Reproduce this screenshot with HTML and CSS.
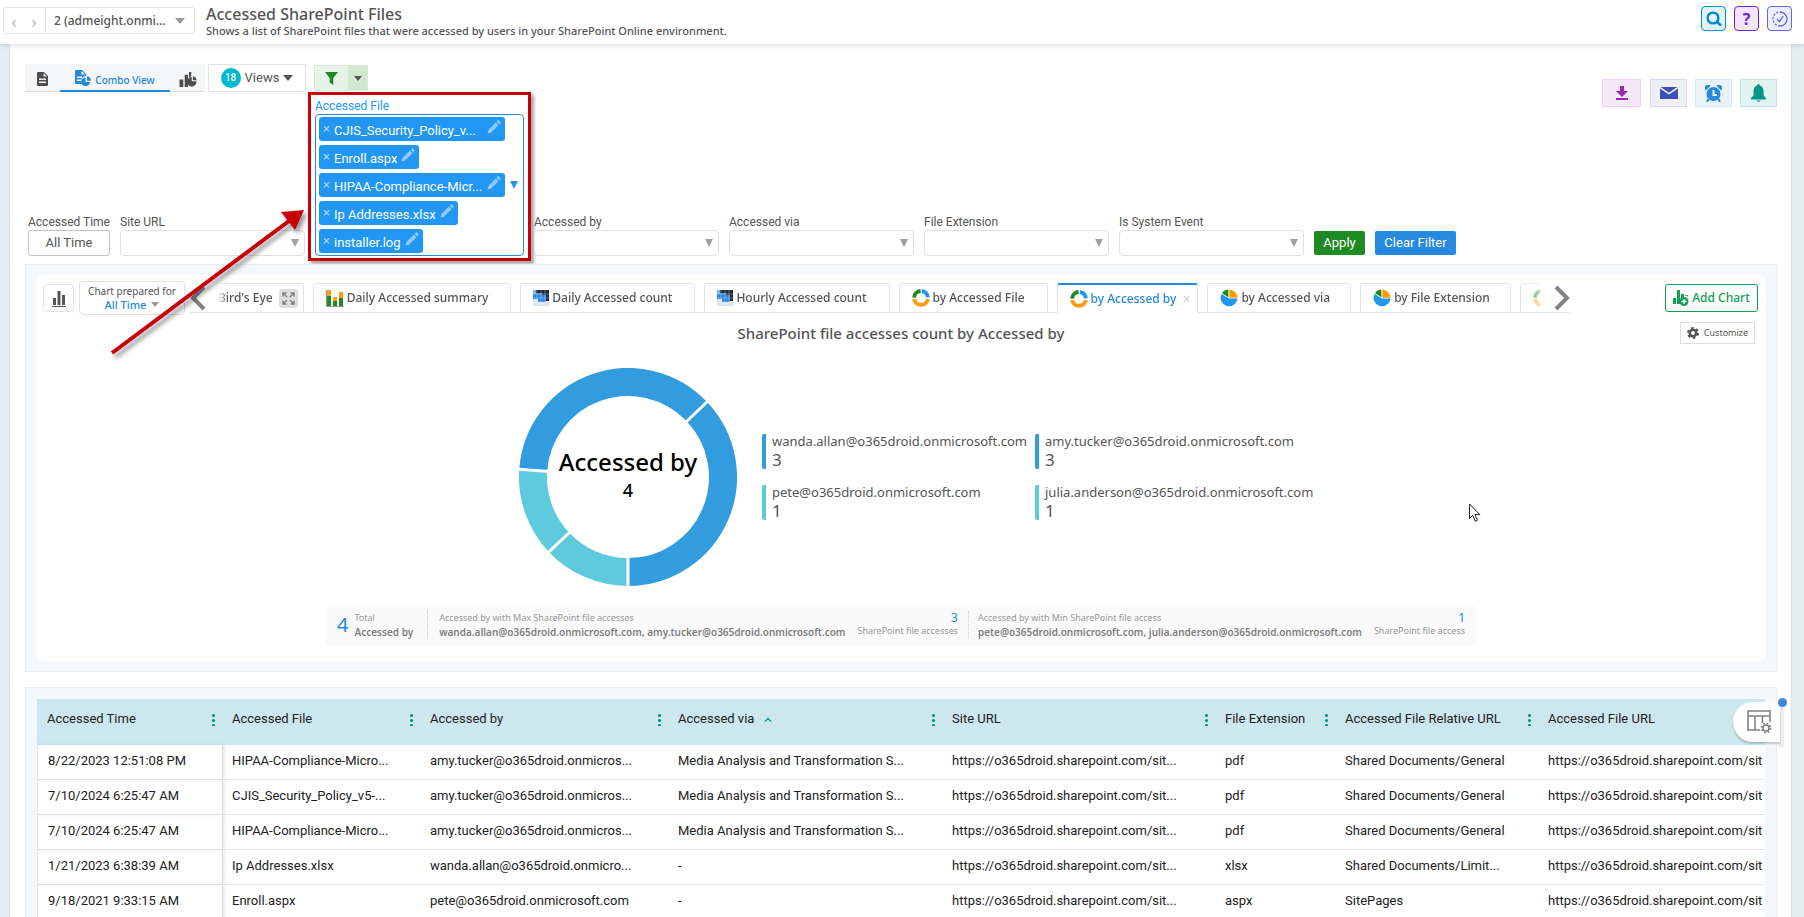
FILE: index.html
```html
<!DOCTYPE html>
<html lang="en">
<head>
<meta charset="utf-8">
<title>Accessed SharePoint Files</title>
<link rel="stylesheet" href="styles.css">
</head>
<body>
<svg class="defs" aria-hidden="true">
  <symbol id="i-donut" viewBox="0 0 18 18"><g fill="none" stroke-width="4"><path stroke="#ff9c07" d="M2.1 10a7 7 0 0 0 13.8 0"/><path stroke="#2196f3" d="M10 2.1a7 7 0 0 1 5.9 6.3"/><path stroke="#1f8a22" d="M2.1 8.6A7 7 0 0 1 8.6 2"/></g></symbol>
  <symbol id="i-pie" viewBox="0 0 18 18"><path fill="#2196f3" d="M9 9.6h8.4A8.4 8.4 0 1 1 1.6 5z"/><path fill="#ff9c07" d="M9.3 8.8V.6a8.3 8.3 0 0 1 8.2 8.2z"/><path fill="#1f8a22" d="M8.4 8.2V.6A8.4 8.4 0 0 0 2 4.2z"/></symbol>
  <symbol id="i-heat" viewBox="0 0 16 16"><path fill="#d9e6f2" d="M0 0h16v16H0z"/><path fill="#222a38" d="M3 0h13v11h-3V5H9V3H3z"/><path fill="#2f86e0" d="M0 4h3V3h6v2h4v7H5V9H0z"/><path fill="#6db5f5" d="M0 0h3v4H0z"/><path stroke="#fff" stroke-width=".3" fill="none" d="M4 0v16M8 0v16M12 0v16M0 4h16M0 8h16M0 12h16"/></symbol>
  <symbol id="i-pencil" viewBox="0 0 14 14"><path d="M.5 13.5l.9-3.6 7.4-7.4 2.7 2.7-7.4 7.4zM9.6 1.7l1-1c.5-.5 1.100-.5 1.600 0l1.100 1.100c.5.5.5 1.100 0 1.600l-1 1z"/></symbol>
  <symbol id="i-chart" viewBox="0 0 18 17"><path d="M0 9h4v8H0zM5.500 4h3.500v13H5.500zM10 1h2.500v4.500A6 6 0 0 0 10 7.500z"/><path d="M13 6.500V11h5a5 5 0 1 1-5-4.500z"/><path d="M14.200 5.500a4.500 4.500 0 0 1 3.800 4.200h-3.800z"/></symbol>
</svg>
<header class="topbar">
  <div class="switcher">
    <button class="step" aria-label="Previous">&#8249;</button>
    <button class="step" aria-label="Next">&#8250;</button>
    <button class="tenant"><span>2 (admeight.onmi...</span><i class="caret caret-grey"></i></button>
  </div>
  <div class="heading">
    <h1>Accessed SharePoint Files</h1>
    <p>Shows a list of SharePoint files that were accessed by users in your SharePoint Online environment.</p>
  </div>
  <div class="top-icons">
    <button class="sq sq-search" aria-label="Search"><svg width="16" height="16" viewBox="0 0 16 16"><g fill="none" stroke="#0288d1" stroke-width="2.400"><circle cx="7" cy="7" r="5.400"/><path d="M10.500 10.500l4.500 4"/></g></svg></button>
    <button class="sq sq-help" aria-label="Help">?</button>
    <button class="sq sq-check" aria-label="Status"><svg width="16" height="16" viewBox="0 0 16 16"><g fill="none" stroke="#6366f1" stroke-width="1.300"><path d="M8 1a7 7 0 0 1 0 14"/><path stroke-dasharray="2 1.600" d="M8 15A7 7 0 0 1 8 1"/><path d="M5 8.200l2.300 2.500 4-5.500"/></g></svg></button>
  </div>
</header>
<main class="page">
  <section class="controls">
    <div class="left">
      <div class="toolbar">
        <div class="view-tabs">
          <button class="vtab" aria-label="Report view"><svg width="11" height="14" viewBox="0 0 11 14"><path fill="#4d4d4d" fill-rule="evenodd" d="M0 1.200Q0 0 1.200 0H7l4 4v8.800q0 1.200-1.200 1.200H1.200Q0 14 0 12.800zM6.500 1v3.500H10zM2 6.500V8h7V6.500zM2 9.500V11h7V9.500z"/></svg></button>
          <button class="vtab vtab-on"><svg width="16" height="16" viewBox="0 0 16 16"><path fill="#2589dd" fill-rule="evenodd" d="M0 1q0-1 1-1h6l4 4v2a5 5 0 0 0-4 8H1q-1 0-1-1zM6.500 1v3.500H10zM2 6.500V8h5V6.500zM2 9.500V11h4V9.500z"/><path fill="#2589dd" d="M10.500 7.500V12H15a4.400 4.400 0 1 1-4.500-4.500z"/><path fill="#2589dd" d="M12 6.500a4.200 4.200 0 0 1 4 4.200h-4z"/></svg><span>Combo View</span></button>
          <button class="vtab" aria-label="Chart view"><svg width="18" height="16" fill="#4d4d4d"><use href="#i-chart"/></svg></button>
        </div>
        <button class="views"><b>18</b>Views<i class="caret"></i></button>
        <div class="filter-btn">
          <button class="funnel" aria-label="Filter"><svg width="13" height="13" viewBox="0 0 13 13"><path fill="#1f8a22" d="M0 0h13L8.300 6v7L4.700 10.500V6z"/></svg></button>
          <button class="funnel-more" aria-label="Filter options"><i class="caret"></i></button>
        </div>
      </div>
      <div class="filters">
        <div class="field field-time"><label for="f-time">Accessed Time</label><button id="f-time" class="time">All Time</button></div>
        <div class="field"><label for="f-site">Site URL</label><div class="pick"><select id="f-site"><option></option></select></div></div>
        <div class="field field-file">
          <span class="lbl">Accessed File</span>
          <div class="multi">
            <div class="tags">
              <span class="tag tag-wide"><button aria-label="Remove">×</button><span>CJIS_Security_Policy_v...</span><svg><use href="#i-pencil"/></svg></span>
              <span class="tag"><button aria-label="Remove">×</button><span>Enroll.aspx</span><svg><use href="#i-pencil"/></svg></span>
              <span class="tag tag-wide"><button aria-label="Remove">×</button><span>HIPAA-Compliance-Micr...</span><svg><use href="#i-pencil"/></svg></span>
              <span class="tag"><button aria-label="Remove">×</button><span>Ip Addresses.xlsx</span><svg><use href="#i-pencil"/></svg></span>
              <span class="tag"><button aria-label="Remove">×</button><span>installer.log</span><svg><use href="#i-pencil"/></svg></span>
            </div>
            <i class="tri tri-blue"></i>
          </div>
          <div class="callout"></div>
          <svg class="pointer" viewBox="0 0 200 150" width="200" height="150"><path d="M3 144L180 12" stroke="#c8000a" stroke-width="4"/><path fill="#c8000a" d="M195 1l-9 20-14-18z"/></svg>
        </div>
        <div class="field"><label for="f-by">Accessed by</label><div class="pick"><select id="f-by"><option></option></select></div></div>
        <div class="field"><label for="f-via">Accessed via</label><div class="pick"><select id="f-via"><option></option></select></div></div>
        <div class="field"><label for="f-ext">File Extension</label><div class="pick"><select id="f-ext"><option></option></select></div></div>
        <div class="field"><label for="f-sys">Is System Event</label><div class="pick"><select id="f-sys"><option></option></select></div></div>
        <button class="apply">Apply</button>
        <button class="clear">Clear Filter</button>
      </div>
    </div>
    <div class="actions">
      <button class="act act-down" aria-label="Download"><svg width="12" height="14" viewBox="0 0 12 14"><path fill="#9c27b0" d="M4 0h4v5h4l-6 6-6-6h4zM0 12h12v2H0z"/></svg></button>
      <button class="act act-mail" aria-label="Mail"><svg width="18" height="12" viewBox="0 0 18 12"><path fill="#3f51b5" d="M0 0h18v12H0z"/><path d="M0 .5l9 6 9-6" fill="none" stroke="#edf0f8" stroke-width="1.500"/></svg></button>
      <button class="act act-clock" aria-label="Schedule"><svg width="17" height="17" viewBox="0 0 17 17"><path fill="#2589dd" d="M.8 5.500A3 3 0 0 1 5.500.8zM16.200 5.500A3 3 0 0 0 11.500.8z"/><circle cx="8.500" cy="9" r="7" fill="#2589dd"/><path d="M3.500 14l-1.500 3M13.500 14l1.500 3" stroke="#2589dd" stroke-width="2"/><path d="M8.500 5v5H12" fill="none" stroke="#fff" stroke-width="1.800"/></svg></button>
      <button class="act act-bell" aria-label="Alerts"><svg width="15" height="18" viewBox="0 0 15 18"><path fill="#009688" d="M7.500 0a1 1 0 0 1 1 1.200C11 2 12.500 4 12.500 7v4.500L15 14v1.500H0V14l2.500-2.500V7c0-3 1.500-5 4-5.800a1 1 0 0 1 1-1.200zM5 16.500h5l-2.500 1.500z"/></svg></button>
    </div>
  </section>

  <section class="frame">
    <div class="card">
      <div class="chart-head">
        <button class="bars" aria-label="Chart type"><svg width="14" height="16" viewBox="0 0 14 16"><path fill="#555" d="M1 7h3v7H1zM5.500 0h3v14h-3zM10 4h3v10h-3zM0 15h14v1H0z"/></svg></button>
        <button class="prepared"><span>Chart prepared for</span><strong>All Time<i class="caret caret-grey"></i></strong></button>
        <div class="strip">
          <button class="arrow" aria-label="Scroll left"><svg width="16" height="26" viewBox="0 0 16 26"><path d="M14 2L3 13l11 11" fill="none" stroke="#808285" stroke-width="4"/></svg></button>
          <div class="viewport">
            <button class="tab tab-first">Bird's Eye<span class="expand"><svg width="13" height="13" viewBox="0 0 13 13"><path d="M5 5L1.500 1.500M8 5l3.500-3.500M5 8l-3.500 3.500M8 8l3.500 3.500M1 4.500V1h3.500M8.500 1H12v3.500M12 8.500V12H8.500M4.500 12H1V8.500" fill="none" stroke="#808080" stroke-width="1.400"/></svg></span></button>
            <button class="tab"><svg width="18" height="17" viewBox="0 0 18 17"><path fill="#ff9c07" d="M1 0h4v6H1zM7 7h4v4H7zM13 2h4v6h-4z"/><path fill="#1f8a22" d="M1 6h4v10H1zM7 11h4v5H7zM13 8h4v8h-4z"/><path d="M.5 0v16.500H18" fill="none" stroke="#999"/></svg>Daily Accessed summary</button>
            <button class="tab"><svg width="16" height="16"><use href="#i-heat"/></svg>Daily Accessed count</button>
            <button class="tab"><svg width="16" height="16"><use href="#i-heat"/></svg>Hourly Accessed count</button>
            <button class="tab"><svg width="18" height="18"><use href="#i-donut"/></svg>by Accessed File</button>
            <button class="tab tab-on"><svg width="18" height="18"><use href="#i-donut"/></svg>by Accessed by<span class="x">×</span></button>
            <button class="tab tab-pie"><svg width="18" height="18"><use href="#i-pie"/></svg>by Accessed via</button>
            <button class="tab tab-pie"><svg width="18" height="18"><use href="#i-pie"/></svg>by File Extension</button>
            <button class="tab" aria-label="Next chart"><svg width="18" height="18"><use href="#i-donut"/></svg></button>
          </div>
          <button class="arrow" aria-label="Scroll right"><svg width="16" height="26" viewBox="0 0 16 26"><path d="M2 2l11 11L2 24" fill="none" stroke="#808285" stroke-width="4"/></svg></button>
        </div>
        <button class="add"><svg width="16" height="16" viewBox="0 0 16 16"><path fill="#12a150" d="M0 8h3v6H0zM4 0h3v14H4zM8 4h3v3L8 9z"/><circle cx="11" cy="11.500" r="4.500" fill="#12a150"/><path d="M11 9v5M8.500 11.500h5" stroke="#fff" stroke-width="1.300"/><path d="M12 5l3 1" stroke="#12a150"/></svg>Add Chart</button>
      </div>
      <div class="chart-title">
        <h2>SharePoint file accesses count by Accessed by</h2>
        <button class="customize"><svg width="12" height="12" viewBox="0 0 12 12"><circle cx="6" cy="6" r="3.200" fill="none" stroke="#555" stroke-width="2.600"/><circle cx="6" cy="6" r="5" fill="none" stroke="#555" stroke-width="2" stroke-dasharray="2.600 2.640"/></svg>Customize</button>
      </div>
      <div class="chart-body">
        <svg class="donut" width="218" height="218" viewBox="-109 -109 218 218" role="img" aria-label="Accessed by 4">
          <g fill="none" stroke-width="28">
            <path stroke="#329cde" d="M-94.800 -6.600A95 95 0 0 1 68.900 -65.400"/>
            <path stroke="#329cde" d="M68.900 -65.400A95 95 0 0 1 0 95"/>
            <path stroke="#5ecade" d="M0 95A95 95 0 0 1 -69 65.300"/>
            <path stroke="#5ecade" d="M-69 65.300A95 95 0 0 1 -94.800 -6.600"/>
          </g>
          <path stroke="#fff" stroke-width="3" d="M-79 -5.500L-110 -7.700M58 -55L81 -77M0 79V110M-57 54L-81 76.600"/>
          <text y="-6" class="d-title">Accessed by</text>
          <text y="20" class="d-num">4</text>
        </svg>
        <ul class="legend">
          <li><span>wanda.allan@o365droid.onmicrosoft.com</span><b>3</b></li>
          <li><span>amy.tucker@o365droid.onmicrosoft.com</span><b>3</b></li>
          <li class="teal"><span>pete@o365droid.onmicrosoft.com</span><b>1</b></li>
          <li class="teal"><span>julia.anderson@o365droid.onmicrosoft.com</span><b>1</b></li>
        </ul>
      </div>
      <div class="summary">
        <div class="s-total"><em>4</em><div><span>Total</span><strong>Accessed by</strong></div></div>
        <div class="s-item"><div><span>Accessed by with Max SharePoint file accesses</span><strong>wanda.allan@o365droid.onmicrosoft.com, amy.tucker@o365droid.onmicrosoft.com</strong></div><div class="s-num"><em>3</em><span>SharePoint file accesses</span></div></div>
        <div class="s-item"><div><span>Accessed by with Min SharePoint file access</span><strong>pete@o365droid.onmicrosoft.com, julia.anderson@o365droid.onmicrosoft.com</strong></div><div class="s-num"><em>1</em><span>SharePoint file access</span></div></div>
      </div>
      <svg class="cursor" width="12" height="20" viewBox="0 0 12 20"><path fill="#fff" stroke="#222" d="M.5 1v14.500l3.300-3.200 2.400 6 2.200-1-2.400-5.700h4.800z"/></svg>
    </div>
  </section>

  <section class="frame frame-table">
    <table>
      <colgroup><col class="c1"><col class="c2"><col class="c3"><col class="c4"><col class="c5"><col class="c6"><col class="c7"><col class="c8"></colgroup>
      <thead><tr>
        <th><div>Accessed Time<i class="dots"></i></div></th><th><div>Accessed File<i class="dots"></i></div></th><th><div>Accessed by<i class="dots"></i></div></th>
        <th><div><span>Accessed via<svg class="sort" width="8" height="5" viewBox="0 0 8 5"><path d="M1 4.500l3-3 3 3" fill="none" stroke="#009688" stroke-width="1.300"/></svg></span><i class="dots"></i></div></th>
        <th><div>Site URL<i class="dots"></i></div></th><th><div>File Extension<i class="dots"></i></div></th><th><div>Accessed File Relative URL<i class="dots"></i></div></th><th><div>Accessed File URL</div></th>
      </tr></thead>
      <tbody>
        <tr><td>8/22/2023 12:51:08 PM</td><td>HIPAA-Compliance-Micro...</td><td>amy.tucker@o365droid.onmicros...</td><td>Media Analysis and Transformation S...</td><td>https://o365droid.sharepoint.com/sit...</td><td>pdf</td><td>Shared Documents/General</td><td>https://o365droid.sharepoint.com/sit</td></tr>
        <tr><td>7/10/2024 6:25:47 AM</td><td>CJIS_Security_Policy_v5-...</td><td>amy.tucker@o365droid.onmicros...</td><td>Media Analysis and Transformation S...</td><td>https://o365droid.sharepoint.com/sit...</td><td>pdf</td><td>Shared Documents/General</td><td>https://o365droid.sharepoint.com/sit</td></tr>
        <tr><td>7/10/2024 6:25:47 AM</td><td>HIPAA-Compliance-Micro...</td><td>amy.tucker@o365droid.onmicros...</td><td>Media Analysis and Transformation S...</td><td>https://o365droid.sharepoint.com/sit...</td><td>pdf</td><td>Shared Documents/General</td><td>https://o365droid.sharepoint.com/sit</td></tr>
        <tr><td>1/21/2023 6:38:39 AM</td><td>Ip Addresses.xlsx</td><td>wanda.allan@o365droid.onmicro...</td><td>-</td><td>https://o365droid.sharepoint.com/sit...</td><td>xlsx</td><td>Shared Documents/Limit...</td><td>https://o365droid.sharepoint.com/sit</td></tr>
        <tr><td>9/18/2021 9:33:15 AM</td><td>Enroll.aspx</td><td>pete@o365droid.onmicrosoft.com</td><td>-</td><td>https://o365droid.sharepoint.com/sit...</td><td>aspx</td><td>SitePages</td><td>https://o365droid.sharepoint.com/sit</td></tr>
      </tbody>
    </table>
    <i class="rail"></i>
    <button class="columns" aria-label="Column settings"><svg width="25" height="24" viewBox="0 0 25 24"><g fill="none" stroke="#808080" stroke-width="1.600"><path d="M13 20H1V1h22v11M1 6h22M8 6v14M15.500 6v7"/><circle cx="19" cy="18" r="3"/><circle cx="19" cy="18" r="4.600" stroke-dasharray="1.800 1.810"/></g></svg></button>
    <i class="blue-dot"></i>
  </section>
</main>
</body>
</html>
```

FILE: styles.css
```css
*{box-sizing:border-box}
html,body{margin:0;height:100%}
body{overflow:hidden;background:#e4edf0;color:#555;font:13px/18px "Noto Sans","Open Sans",sans-serif}
button,select{font:inherit;color:inherit;background:#fff;border:0;padding:0;margin:0}
h1,h2,p,ul{margin:0;padding:0;font-weight:400}
i{display:inline-block;flex:none}
svg{flex:none}
.defs{position:absolute;width:0;height:0}
.caret{border:5px solid transparent;border-top:6px solid #555;border-bottom:0}
.caret-grey{border-top-color:#999}

.topbar{position:relative;z-index:2;display:flex;height:44px;background:#fff;box-shadow:0 1px 5px rgba(0,0,0,.16);padding:0 12px 0 3px}
.switcher{display:flex;height:27px;margin-top:7px;width:192px;border:1px solid #e2e2e2;border-radius:3px}
.step{width:20px;color:#bbb;font-size:18px;line-height:20px}
.tenant{flex:1;display:flex;align-items:center;justify-content:space-between;border-left:1px solid #e2e2e2;margin-left:1px;padding:0 9px 0 8px;border-radius:3px;font-size:12px;font-weight:500}
.heading{margin-left:11px;flex:1}
.heading h1{font-size:16px;line-height:22px;margin-top:3px;font-weight:500}
.heading p{font-size:11px;line-height:12px;font-weight:500}
.top-icons{display:flex;gap:8px;margin-top:6px}
.sq{width:25px;height:25px;border:1px solid #0288d1;border-radius:4px;display:flex;align-items:center;justify-content:center;background:#e4f3f9}
.sq-help{border-color:#7520d8;background:#f1e6fa;color:#7520d8;font-size:16px;font-weight:700}
.sq-check{border-color:#6366f1;background:#eeeffa}

.page{margin:0 12px 0 9px;background:#fff;border:solid #d5e3e7;border-width:0 1px;padding:20px 14px 0 15px;height:calc(100% - 44px)}
.controls{display:flex;justify-content:space-between;height:200px}
.toolbar{display:flex;height:28px}
.view-tabs{display:flex;background:#f4f6f8;border-bottom:1px solid #ddd;height:28px}
.vtab{width:35px;background:none;display:flex;align-items:center;justify-content:center;padding-top:3px}
.vtab-on{width:110px;color:#2589dd;font-size:10px;font-weight:500;gap:4px;height:28px;border-bottom:2px solid #2589dd;padding-top:2px}
.vtab-on span{padding-top:3px}
.views{width:98px;height:28px;margin-left:3px;border:1px solid #e3e3e3;font-family:Roboto,sans-serif;font-size:13px;display:flex;align-items:center;justify-content:center;gap:4px}
.views b{width:20px;height:20px;border-radius:50%;background:#00b8d4;color:#fff;font-size:10px;line-height:20px;font-weight:500}
.filter-btn{display:flex;margin:1px 0 0 8px;height:26px;border:1px solid #d5ead5}
.filter-btn button{display:flex;align-items:center;justify-content:center}
.funnel{width:33px;background:#e6f4e7}
.funnel-more{width:19px;background:#d0e8d0}
.funnel-more .caret{border-width:5px 4px 0}

.filters{display:flex;align-items:flex-end;gap:10px;padding-left:3px;margin-top:6px;font-family:Roboto,sans-serif}
.field{width:185px;position:relative;font-size:12px}
.field label,.lbl{display:block;line-height:16px}
.field-time{width:82px;white-space:nowrap}
.time{width:100%;height:26px;border:1px solid #c4c4c4;border-radius:3px;font-size:13px}
.pick{position:relative;height:26px}
.pick select{appearance:none;width:100%;height:26px;border:1px solid #e0e0e0;border-radius:4px}
.pick::after,.tri{content:"";border:4px solid transparent;border-top:8px solid #a0a0a0;border-bottom:0}
.pick::after{position:absolute;right:6px;top:9px}
.field-file{width:209px}
.lbl{color:#2196f3}
.multi{display:flex;align-items:center;height:142px;border:1px solid #2589dd;border-radius:4px;padding-left:3px;background:#fff}
.tags{display:flex;flex-direction:column;align-items:flex-start;gap:4px;width:191px}
.tag{display:flex;align-items:center;height:24px;background:#2196f3;color:#fff;border-radius:3px;padding:0 4px;font-size:13px;white-space:nowrap}
.tag span{padding-top:4px}
.tag button{background:none;color:#a6d5fa;width:11px;line-height:16px;text-align:left}
.tag svg{width:14px;height:14px;fill:#90caf9;margin-left:4px;margin-bottom:4px}
.tag-wide{width:186px;justify-content:flex-start}
.tag-wide svg{margin-left:auto}
.tri-blue{border-top-color:#2196f3}
.callout{position:absolute;left:-7px;top:-6px;width:223px;height:169px;border:3px solid #c8000a;box-shadow:3px 3px 3px rgba(0,0,0,.35);pointer-events:none}
.pointer{position:absolute;left:-206px;top:111px;z-index:3;filter:drop-shadow(3px 4px 2px rgba(0,0,0,.4));pointer-events:none}
.apply,.clear{height:24px;margin-bottom:1px;border-radius:2px;color:#fff;font-size:13px;background:#1f8a22;width:51px}
.clear{background:#2589dd;width:81px}
.actions{display:flex;gap:8px;align-items:flex-start;margin-top:15px}
.act{width:37px;height:28px;border:1px solid;display:flex;align-items:center;justify-content:center}
.act-down{width:39px;background:#f5e8f9;border-color:#ecd5f2;margin-right:1px}
.act-mail{background:#edf0f5;border-color:#dad8f2}
.act-clock{background:#e9f2f7;border-color:#d3eaf8}
.act-bell{background:#e3f3f2;border-color:#c2e6e8}

.frame{position:relative;background:#f4f8fa;border:1px solid #eaeff1;padding:10px}
.card{position:relative;background:#fff;border-radius:6px;height:386px;padding:6px 7px 0}
.chart-head{display:flex;align-items:center;height:34px}
.bars{width:31px;height:28px;border:1px solid #e2e2e2;border-radius:4px;padding-top:5px}
.prepared{width:106px;height:34px;margin:0 5px;border:1px solid #e2e2e2;border-radius:4px;font-size:10px;line-height:13px}
.prepared strong{display:flex;justify-content:center;align-items:center;gap:5px;font-size:11px;color:#2589dd;font-weight:500}
.prepared .caret{border-width:5px 4px 0}
.prepared span{display:block}
.strip{flex:1;min-width:0;display:flex;height:30px;background:linear-gradient(#e2e2e2,#e2e2e2) 0 100%/100% 1px no-repeat}
.arrow{width:28px;background:none;text-align:left}
.arrow:last-child{width:30px;text-align:right}
.arrow svg{display:inline-block;vertical-align:middle}
.viewport{flex:1;min-width:0;display:flex;gap:9px;overflow:hidden;mask:linear-gradient(90deg,transparent,#000 10px,#000 calc(100% - 20px),rgba(0,0,0,.3))}
.tab{flex:none;display:flex;align-items:center;gap:3px;height:30px;border:1px solid #e2e2e2;border-radius:3px 3px 0 0;padding:0 22px 0 12px;font-size:12px;font-weight:500;background:none}
.tab-first{padding:0 5px 0 0;border-left:0;gap:6px}
.tab-pie{padding-right:20px}
.expand{display:flex;align-items:center;justify-content:center;width:19px;height:19px;background:#dedede;border-radius:3px}
.tab-on{color:#2589dd;border-top:2px solid #2589dd;border-bottom:0;background:#fff;padding-right:7px}
.x{color:#ccc;font-size:14px;margin-left:3px;font-weight:400}
.add{width:93px;height:28px;margin-left:95px;margin-right:1px;border:1px solid #12a150;border-radius:3px;color:#12a150;font-size:12px;font-weight:500;display:flex;align-items:center;justify-content:center;gap:3px;white-space:nowrap}
.chart-title{display:grid;grid-template-columns:1fr auto 1fr;align-items:center;padding:6px 4px 0 4px}
.chart-title h2{grid-column:2;font-size:15px;line-height:24px;font-weight:500}
.customize{justify-self:end;width:75px;height:22px;border:1px solid #ddd;font-size:9px;display:flex;align-items:center;justify-content:center;gap:5px}
.chart-body{display:flex;justify-content:center;align-items:center;margin-top:23px;padding-left:28px}
.donut text{text-anchor:middle;fill:#000;font-weight:500}
.d-title{font-size:24px}
.d-num{font-size:18px}
.legend{list-style:none;display:grid;grid-template-columns:273px 276px;row-gap:16px;margin-left:25px}
.legend li{border-left:4px solid #329cde;padding-left:6px;height:35px;border-radius:2px}
.legend .teal{border-color:#5ecade}
.legend span{display:block;font-size:13px;line-height:14px}
.legend b{display:block;font-weight:400;font-size:17px;line-height:24px}
.summary{display:flex;width:max-content;height:40px;margin:20px auto 0;background:#fafafa;border-radius:4px;padding:0 11px 3px;font-size:10px;color:#999;line-height:14px;align-items:center}
.summary em{font-style:normal;color:#2589dd}
.summary span,.summary strong{display:block}
.summary strong{font-weight:600;color:#808080}
.s-total{display:flex;align-items:center;gap:6px}
.s-total em{font-size:20px}
.s-item{display:flex;align-items:center;gap:12px;border-left:1px dotted #ccc;margin-left:10px;padding-left:9px;height:28px}
.s-total + .s-item{margin-left:14px;padding-left:11px}
.s-item span,.s-total span{font-size:9px}
.s-num{text-align:right}
.s-num em{display:block;font-size:12px;line-height:13px}
.cursor{position:absolute;left:calc(50% + 568px);top:228px}

.frame-table{margin-top:15px;padding:11px 11px 0;font-family:Roboto,sans-serif}
table{table-layout:fixed;width:100%;border-collapse:separate;border-spacing:0;background:#fff;color:#222;font-size:13px}
.c1{width:186px}.c2{width:198px}.c3{width:248px}.c4{width:274px}.c5{width:273px}.c6{width:120px}.c7{width:203px}
th{background:#cde7ef;height:46px;padding:0 8px 7px 9px;text-align:left;font-weight:400}
th:first-child{padding-left:10px}
th div{display:flex;align-items:center;justify-content:space-between;white-space:nowrap}
td{height:35px;padding:0 0 2px 9px;border-bottom:1px solid #e6e6e6;white-space:nowrap}
td:first-child{padding-left:10px;border-left:1px solid #e6e6e6;border-right:1px solid #ddd;box-shadow:2px 0 3px rgba(0,0,0,.08)}
.sort{margin-left:10px;vertical-align:middle}
.dots{width:3px;height:13px;margin-top:2px;background:radial-gradient(circle,#009688 1px,#009688 1px,transparent 2px) 0 0/3px 5px}
.rail{position:absolute;right:-8px;top:14px;width:6px;height:46px;background:#eee;border-radius:0 0 3px 3px}
.blue-dot{position:absolute;right:-11px;top:10px;width:9px;height:9px;border-radius:50%;background:#3d87dd}
.columns{position:absolute;right:-4px;top:14px;width:47px;height:40px;border-radius:20px 0 0 20px;box-shadow:0 2px 2px rgba(0,0,0,.2);display:flex;align-items:center;justify-content:center;padding-left:6px}
```
